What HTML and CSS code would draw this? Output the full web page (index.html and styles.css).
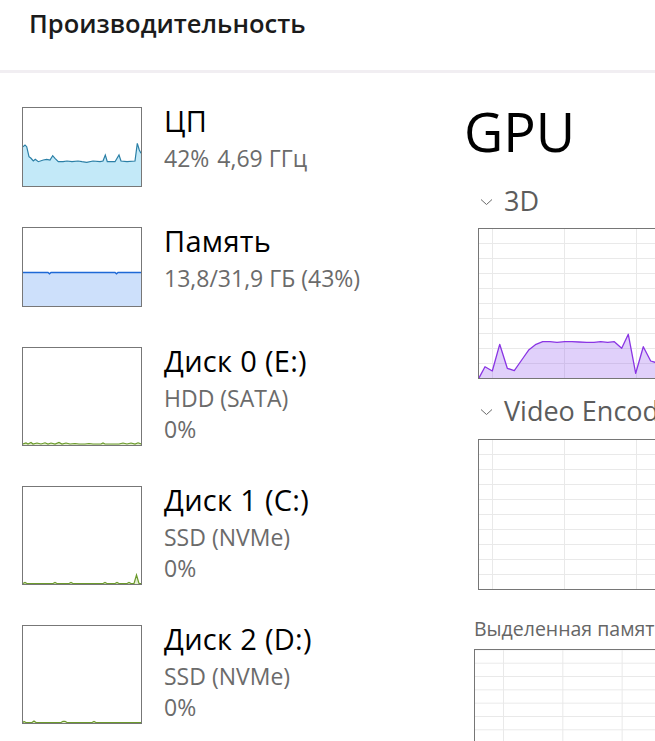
FILE: index.html
```html
<!DOCTYPE html>
<html lang="ru">
<head>
<meta charset="utf-8">
<title>Производительность</title>
<link rel="stylesheet" href="styles.css">
</head>
<body>
<header class="top">
  <h1 class="top-title">Производительность</h1>
</header>
<main class="layout">
  <nav class="side">
    <div class="item">
      <div class="thumb">
        <svg width="118" height="78" viewBox="0 0 118 78">
          <polygon class="cpu-fill" points="0,38.7 2,37 3.7,38.7 6,48.7 8,50.3 10.3,53 12.3,51.3 15.3,53.7 20.3,52 23.7,51.3 27,52 29.7,47.7 32,50.3 35.3,53.7 40,53.7 44,53 49,53.7 55,53 59,53.7 63.7,54.3 70,53 77,53.7 80,53 82.3,47 84.3,53.7 92,53.7 96,47 98,53 104,53.7 112,53 114.3,35.3 116.3,42 118,45.3 118,78 0,78"/>
          <polyline class="cpu-line" points="0,38.7 2,37 3.7,38.7 6,48.7 8,50.3 10.3,53 12.3,51.3 15.3,53.7 20.3,52 23.7,51.3 27,52 29.7,47.7 32,50.3 35.3,53.7 40,53.7 44,53 49,53.7 55,53 59,53.7 63.7,54.3 70,53 77,53.7 80,53 82.3,47 84.3,53.7 92,53.7 96,47 98,53 104,53.7 112,53 114.3,35.3 116.3,42 118,45.3"/>
        </svg>
      </div>
      <div class="info">
        <div class="name">ЦП</div>
        <div class="sub"><span class="pct">42%</span><span>4,69 ГГц</span></div>
      </div>
    </div>
    <div class="item">
      <div class="thumb">
        <svg width="118" height="78" viewBox="0 0 118 78">
          <polygon class="mem-fill" points="0,44.5 25,44.5 26.5,45.8 28,44.5 92,44.5 93.5,45.8 95,44.5 118,44.5 118,78 0,78"/>
          <polyline class="mem-line" points="0,44.5 25,44.5 26.5,45.8 28,44.5 92,44.5 93.5,45.8 95,44.5 118,44.5"/>
        </svg>
      </div>
      <div class="info">
        <div class="name">Память</div>
        <div class="sub">13,8/31,9 ГБ (43%)</div>
      </div>
    </div>
    <div class="item">
      <div class="thumb thumb-disk">
        <svg width="118" height="97" viewBox="0 0 118 97">
          <polygon class="disk-fill" points="0,96 3,95 5,96 8,94.5 10,96 14,95 18,96 22,94.8 25,96 28,95 32,96 36,94.5 39,96 43,95 47,96 52,95.5 56,96 62,96 66,95.5 70,96 78,96 80,95 82,96 90,96 96,96 100,95 104,96 108,95 112,96 115,94.8 118,96 118,97 0,97"/>
          <polyline class="disk-line" points="0,96 3,95 5,96 8,94.5 10,96 14,95 18,96 22,94.8 25,96 28,95 32,96 36,94.5 39,96 43,95 47,96 52,95.5 56,96 62,96 66,95.5 70,96 78,96 80,95 82,96 90,96 96,96 100,95 104,96 108,95 112,96 115,94.8 118,96"/>
        </svg>
      </div>
      <div class="info">
        <div class="name">Диск 0 (E:)</div>
        <div class="sub">HDD (SATA)</div>
        <div class="sub sub-next">0%</div>
      </div>
    </div>
    <div class="item">
      <div class="thumb thumb-disk">
        <svg width="118" height="97" viewBox="0 0 118 97">
          <polygon class="disk-fill" points="0,96.5 2,95.5 4,96.5 30,96.5 32,95.5 34,96.5 46,96.5 48,95.5 50,96.5 80,96.5 82,95.5 84,96.5 92,96.5 94,95.5 96,96.5 104,96.5 106,95.5 108,96.5 111,96.5 113.5,88 116,96.5 118,96.5 118,97 0,97"/>
          <polyline class="disk-line" points="0,96.5 2,95.5 4,96.5 30,96.5 32,95.5 34,96.5 46,96.5 48,95.5 50,96.5 80,96.5 82,95.5 84,96.5 92,96.5 94,95.5 96,96.5 104,96.5 106,95.5 108,96.5 111,96.5 113.5,88 116,96.5 118,96.5"/>
        </svg>
      </div>
      <div class="info">
        <div class="name">Диск 1 (C:)</div>
        <div class="sub">SSD (NVMe)</div>
        <div class="sub sub-next">0%</div>
      </div>
    </div>
    <div class="item">
      <div class="thumb thumb-disk">
        <svg width="118" height="97" viewBox="0 0 118 97">
          <polygon class="disk-fill" points="0,96.5 1,95.5 3,96.5 9,96.5 11,95 13,96.5 38,96.5 40,95.3 42,95.3 44,96.5 69,96.5 71,95.5 73,96.5 118,96.5 118,97 0,97"/>
          <polyline class="disk-line" points="0,96.5 1,95.5 3,96.5 9,96.5 11,95 13,96.5 38,96.5 40,95.3 42,95.3 44,96.5 69,96.5 71,95.5 73,96.5 118,96.5"/>
        </svg>
      </div>
      <div class="info">
        <div class="name">Диск 2 (D:)</div>
        <div class="sub">SSD (NVMe)</div>
        <div class="sub sub-next">0%</div>
      </div>
    </div>
  </nav>
  <section class="detail">
    <div class="gpu">GPU</div>
    <div class="sec-head">
      <svg class="chev" width="13" height="8" viewBox="0 0 13 8"><path d="M1 1.5 L6.5 6.5 L12 1.5"/></svg>
      <span>3D</span>
    </div>
    <div class="chart chart-big">
      <svg width="300" height="149" viewBox="0 0 300 149">
        <polygon class="gpu-fill" points="0,149 6,137.7 13.3,142 20.7,115.3 28.3,139.3 35.3,141.7 42.7,131 50,120.7 57,115.3 63.7,112.7 71,112.7 78,113.3 85.7,112.7 93,112.7 100,113 107.7,113.3 115,113.3 121.7,112.7 128.7,113.3 135.3,112.7 142.7,119.3 149.3,105.3 156.7,144.3 164.3,117.7 171.7,132 176,133.3 184,128 192,134 200,131 210,136 220,132 230,135 240,133 250,136 300,134 300,149"/>
        <polyline class="gpu-line" points="0,149 6,137.7 13.3,142 20.7,115.3 28.3,139.3 35.3,141.7 42.7,131 50,120.7 57,115.3 63.7,112.7 71,112.7 78,113.3 85.7,112.7 93,112.7 100,113 107.7,113.3 115,113.3 121.7,112.7 128.7,113.3 135.3,112.7 142.7,119.3 149.3,105.3 156.7,144.3 164.3,117.7 171.7,132 176,133.3 184,128 192,134 200,131 210,136 220,132 230,135 240,133 250,136 300,134"/>
      </svg>
    </div>
    <div class="sec-head sec-head-2">
      <svg class="chev" width="13" height="8" viewBox="0 0 13 8"><path d="M1 1.5 L6.5 6.5 L12 1.5"/></svg>
      <span>Video Encode</span>
    </div>
    <div class="chart chart-big"></div>
    <div class="label">Выделенная память графического процессора</div>
    <div class="chart chart-mem"></div>
  </section>
</main>
</body>
</html>
```
FILE: styles.css
```css
* { box-sizing: border-box; }
html, body { margin: 0; padding: 0; }
body {
  width: 655px;
  height: 741px;
  overflow: hidden;
  background: #ffffff;
  font-family: "Open Sans", "Noto Sans", sans-serif;
  color: #000;
}
.top {
  height: 73px;
  border-bottom: 3px solid #f1eef2;
  padding: 5px 0 0 29px;
}
.top-title {
  margin: 0;
  font-size: 25.5px;
  font-weight: 600;
  line-height: 36px;
  color: #1b1b1b;
  white-space: nowrap;
}
.layout {
  display: flex;
  align-items: flex-start;
}
.side {
  flex: 0 0 464px;
  width: 464px;
  padding: 34px 0 0 22px;
  display: flex;
  flex-direction: column;
  gap: 40px;
}
.item {
  display: flex;
  align-items: flex-start;
  gap: 22px;
}
.thumb {
  flex: 0 0 auto;
  width: 120px;
  height: 80px;
  border: 1px solid #777;
  background: #fff;
}
.thumb-disk { height: 99px; }
.thumb svg { display: block; }
.cpu-fill { fill: #c3e9f8; }
.cpu-line { fill: none; stroke: #2a7fa6; stroke-width: 1.2; }
.mem-fill { fill: #cde0fb; }
.mem-line { fill: none; stroke: #1e69d6; stroke-width: 1.4; }
.disk-fill { fill: #e3efd0; }
.disk-line { fill: none; stroke: #6b9a2c; stroke-width: 1.2; }
.info { white-space: nowrap; }
.name {
  font-size: 29px;
  line-height: 38px;
  margin-top: -5px;
  color: #000;
  letter-spacing: 0.3px;
}
.sub {
  font-size: 23px;
  line-height: 31px;
  margin-top: 3px;
  color: #6b6b6b;
}
.sub-next { margin-top: 0; }
.pct { margin-right: 8px; }
.detail {
  flex: 0 0 auto;
  width: 400px;
  padding-top: 28px;
  white-space: nowrap;
}
.gpu {
  font-size: 54px;
  line-height: 60px;
  color: #000;
}
.sec-head {
  display: flex;
  align-items: center;
  gap: 11px;
  margin: 23px 0 0 16px;
  font-size: 27px;
  line-height: 34px;
  color: #5c5c5c;
}
.sec-head-2 { margin-top: 15px; }
.chev { display: block; flex: 0 0 auto; margin-top: 2px; }
.chev path { fill: none; stroke: #6a6a6a; stroke-width: 1; }
.chart {
  width: 300px;
  border: 1px solid #767676;
  background-color: #fff;
}
.chart svg { display: block; }
.chart-big {
  height: 151px;
  margin: 10px 0 0 14px;
  background-image:
    linear-gradient(to top, #e9e9e9 1px, transparent 1px),
    linear-gradient(to right, #e9e9e9 1px, transparent 1px);
  background-size: 100% 15px, 72px 100%;
  background-position: 0 0, 13px 0;
}
.sec-head-2 + .chart-big { margin-top: 11px; }
.gpu-fill { fill: rgba(152, 98, 238, 0.3); }
.gpu-line { fill: none; stroke: #8a35e4; stroke-width: 1.3; stroke-linejoin: round; }
.label {
  margin: 27px 0 0 10px;
  font-size: 19.5px;
  line-height: 24px;
  color: #666;
}
.chart-mem {
  height: 140px;
  margin: 8px 0 0 10px;
  background-image:
    linear-gradient(to top, #e9e9e9 1px, transparent 1px),
    linear-gradient(to right, #e9e9e9 1px, transparent 1px);
  background-size: 100% 13.33px, 59.33px 100%;
  background-position: 0 0.33px, 28px 0;
}
```
